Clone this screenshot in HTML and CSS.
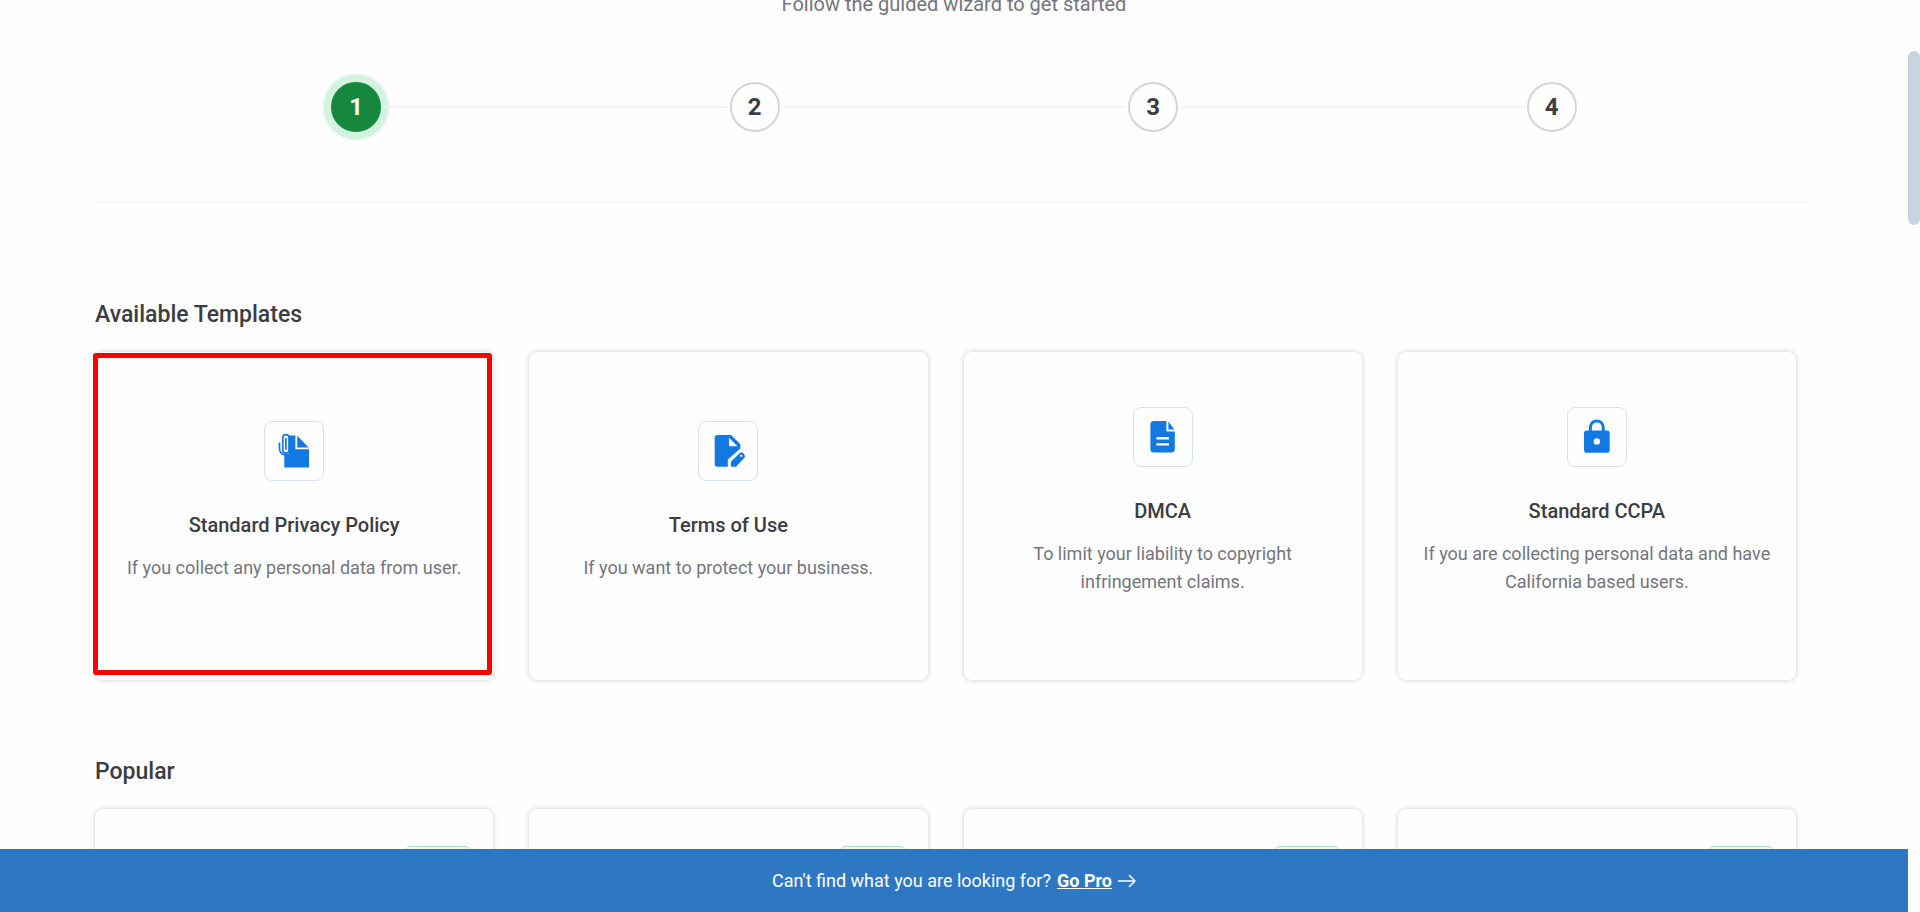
FILE: index.html
```html
<!DOCTYPE html>
<html lang="en">
<head>
    <meta charset="UTF-8">
    <meta name="viewport" content="width=device-width, initial-scale=1.0">
    <title>Create Legal Page</title>
    <link rel="stylesheet" href="styles.css">
</head>
<body>
    <div class="app">
        <main class="content">
            <p class="intro">Follow the guided wizard to get started</p>

            <ol class="steps">
                <li class="step"><span class="step-number active">1</span></li>
                <li class="step"><span class="step-number">2</span></li>
                <li class="step"><span class="step-number">3</span></li>
                <li class="step"><span class="step-number">4</span></li>
            </ol>

            <section class="templates">
                <h2>Available Templates</h2>
                <div class="cards">
                    <a class="card selected" href="#">
                        <span class="card-icon">
                            <svg viewBox="0 0 60 60" aria-hidden="true">
                                <path d="M24.5 14.5H31.4V28.3H45V46.5H20.3V33H24.5z"/>
                                <path d="M33.3 14.8L44.6 26.4H33.3z"/>
                                <path class="loop" d="M25 29V16.8A3.1 3.1 0 0 0 18.8 16.8V29A3.1 3.1 0 0 0 25 29z"/>
                                <path class="clip" d="M15.5 21.5V27.5A6 6 0 0 0 21.5 33.8M21.9 17V28.8"/>
                            </svg>
                        </span>
                        <h3>Standard Privacy Policy</h3>
                        <p>If you collect any personal data from user.</p>
                    </a>
                    <a class="card" href="#">
                        <span class="card-icon">
                            <svg viewBox="0 0 60 60" aria-hidden="true">
                                <path fill-rule="evenodd" d="M19.5 14H33L42.4 23.2V27.4L29.8 38.4V45.7H19.5A2.8 2.8 0 0 1 16.7 43V16.8A2.8 2.8 0 0 1 19.5 14zM31 16.8V25.2H39.4z"/>
                                <path fill-rule="evenodd" d="M33 40.4L41.6 32.2A2.6 2.6 0 0 1 45.2 32.2L46.2 33.4A2.6 2.6 0 0 1 46.2 37L38 45.7H33zM43.2 33.4L41.8 34.8L43.2 36.2L44.6 34.8z"/>
                            </svg>
                        </span>
                        <h3>Terms of Use</h3>
                        <p>If you want to protect your business.</p>
                    </a>
                    <a class="card" href="#">
                        <span class="card-icon">
                            <svg viewBox="0 0 60 60" aria-hidden="true">
                                <path fill-rule="evenodd" d="M21 14H33.4V24.6H41.8V42A3.6 3.6 0 0 1 38.2 45.6H21A3.6 3.6 0 0 1 17.4 42V17.6A3.6 3.6 0 0 1 21 14zM23.4 30V32.4H36V30zM23.4 36.2V38.6H36V36.2z"/>
                                <path d="M35.4 14.4L41.4 22.6H35.4z"/>
                            </svg>
                        </span>
                        <h3>DMCA</h3>
                        <p>To limit your liability to copyright infringement claims.</p>
                    </a>
                    <a class="card" href="#">
                        <span class="card-icon">
                            <svg viewBox="0 0 60 60" aria-hidden="true">
                                <path fill-rule="evenodd" d="M19.8 23.4H39.9A2.8 2.8 0 0 1 42.7 26.2V42.9A2.8 2.8 0 0 1 39.9 45.7H19.8A2.8 2.8 0 0 1 17 42.9V26.2A2.8 2.8 0 0 1 19.8 23.4zM29.8 31.2A3.2 3.2 0 1 0 29.8 37.6A3.2 3.2 0 1 0 29.8 31.2z"/>
                                <path class="shackle" d="M23.4 24.5V20.3A6.4 6.4 0 0 1 36.2 20.3V24.5"/>
                            </svg>
                        </span>
                        <h3>Standard CCPA</h3>
                        <p>If you are collecting personal data and have California based users.</p>
                    </a>
                </div>
            </section>

            <section class="templates">
                <h2>Popular</h2>
                <div class="cards">
                    <a class="card" href="#" aria-label="Popular template"><span class="badge"></span></a>
                    <a class="card" href="#" aria-label="Popular template"><span class="badge"></span></a>
                    <a class="card" href="#" aria-label="Popular template"><span class="badge"></span></a>
                    <a class="card" href="#" aria-label="Popular template"><span class="badge"></span></a>
                </div>
            </section>
        </main>

        <footer class="promo">
            <span>Can't find what you are looking for?</span>
            <a href="#">Go Pro</a>
            <svg viewBox="0 0 18 14" aria-hidden="true">
                <path d="M0 7H17M11 1L17 7L11 13"/>
            </svg>
        </footer>
    </div>

    <div class="scrollbar"><div class="thumb"></div></div>
</body>
</html>
```

FILE: styles.css
```css
* {
    box-sizing: border-box;
}
body {
    font-family: Roboto, sans-serif;
    background-color: #fefefe;
    color: #3c3d43;
    display: flex;
    height: 100vh;
    margin: 0;
    overflow: hidden;
}
h2, h3, p {
    margin: 0;
}
.app {
    flex: 1;
    display: flex;
    flex-direction: column;
}
.content {
    flex: 1;
    min-height: 0;
    overflow: hidden;
    padding: 0 95px;
}
.intro {
    margin-top: -11px;
    font-size: 20px;
    line-height: 30px;
    text-align: center;
    color: #74757f;
}

/* Wizard steps */
.steps {
    display: grid;
    grid-template-columns: repeat(4, 1fr);
    list-style: none;
    margin: 0;
    padding: 63px 62px 70px;
    border-bottom: 1px solid #f1f4f4;
}
.step {
    display: grid;
    grid-template-columns: 1fr 50px 1fr;
    align-items: center;
    gap: 3px;
}
.step::before, .step::after {
    content: "";
    height: 2px;
    background-color: #f3f4f4;
}
.step:first-child::before, .step:last-child::after {
    background-color: transparent;
}
.step-number {
    display: flex;
    justify-content: center;
    align-items: center;
    height: 50px;
    border: 2px solid #d5d5d8;
    border-radius: 50%;
    font-size: 24px;
    font-weight: 700;
}
.step-number.active {
    background-color: #15883e;
    border-color: #15883e;
    color: #fff;
    box-shadow: 0 0 2px 8px #d3f3e0;
}

/* Template cards */
.templates {
    padding: 94px 17px 0 0;
}
.templates + .templates {
    padding-top: 74px;
}
.templates h2 {
    margin-bottom: 19px;
    font-size: 23px;
    font-weight: 500;
    line-height: 36px;
}
.cards {
    display: grid;
    grid-template-columns: repeat(4, 1fr);
    gap: 36px;
}
.card {
    position: relative;
    display: flex;
    flex-direction: column;
    justify-content: center;
    align-items: center;
    min-height: 328px;
    padding: 0 24px;
    border-radius: 8px;
    background-color: #fefefe;
    box-shadow: 0 0 5px rgba(0, 0, 0, 0.2);
    color: inherit;
    text-align: center;
    text-decoration: none;
}
.card.selected::after {
    content: "";
    position: absolute;
    inset: 1px 1px 5px -2px;
    border: 5px solid #fe0000;
    border-radius: 3px;
}
.card-icon {
    width: 60px;
    height: 60px;
    border: 1px solid #d5e3f1;
    border-radius: 8px;
}
.card-icon svg {
    display: block;
    margin: -1px;
    width: 60px;
    height: 60px;
    fill: #1279e2;
}
.card-icon .clip, .card-icon .loop {
    fill: none;
    stroke: #1279e2;
    stroke-width: 1.7;
}
.card-icon .loop {
    fill: #fefefe;
}
.card-icon .shackle {
    fill: none;
    stroke: #1279e2;
    stroke-width: 3;
}
.card h3 {
    margin: 29px 0 14px;
    font-size: 20px;
    font-weight: 500;
    line-height: 30px;
}
.card p {
    margin-bottom: 29px;
    font-size: 18px;
    line-height: 28px;
    color: #74757f;
}
.badge {
    position: absolute;
    top: 37px;
    right: 22px;
    width: 66px;
    height: 28px;
    border: 1px solid #a5dfbd;
    border-radius: 6px;
    background-color: #effcf5;
}

/* Bottom bar */
.promo {
    display: flex;
    justify-content: center;
    align-items: center;
    gap: 6px;
    height: 63px;
    background-color: #2e77c3;
    color: #fff;
    font-size: 18px;
}
.promo a {
    color: inherit;
    font-weight: 700;
}
.promo svg {
    width: 18px;
    height: 14px;
    fill: none;
    stroke: #fff;
    stroke-width: 1.5;
}

.scrollbar {
    width: 12px;
    padding-top: 51px;
}
.thumb {
    height: 174px;
    border-radius: 6px;
    background-color: #c8d5e0;
}
```
